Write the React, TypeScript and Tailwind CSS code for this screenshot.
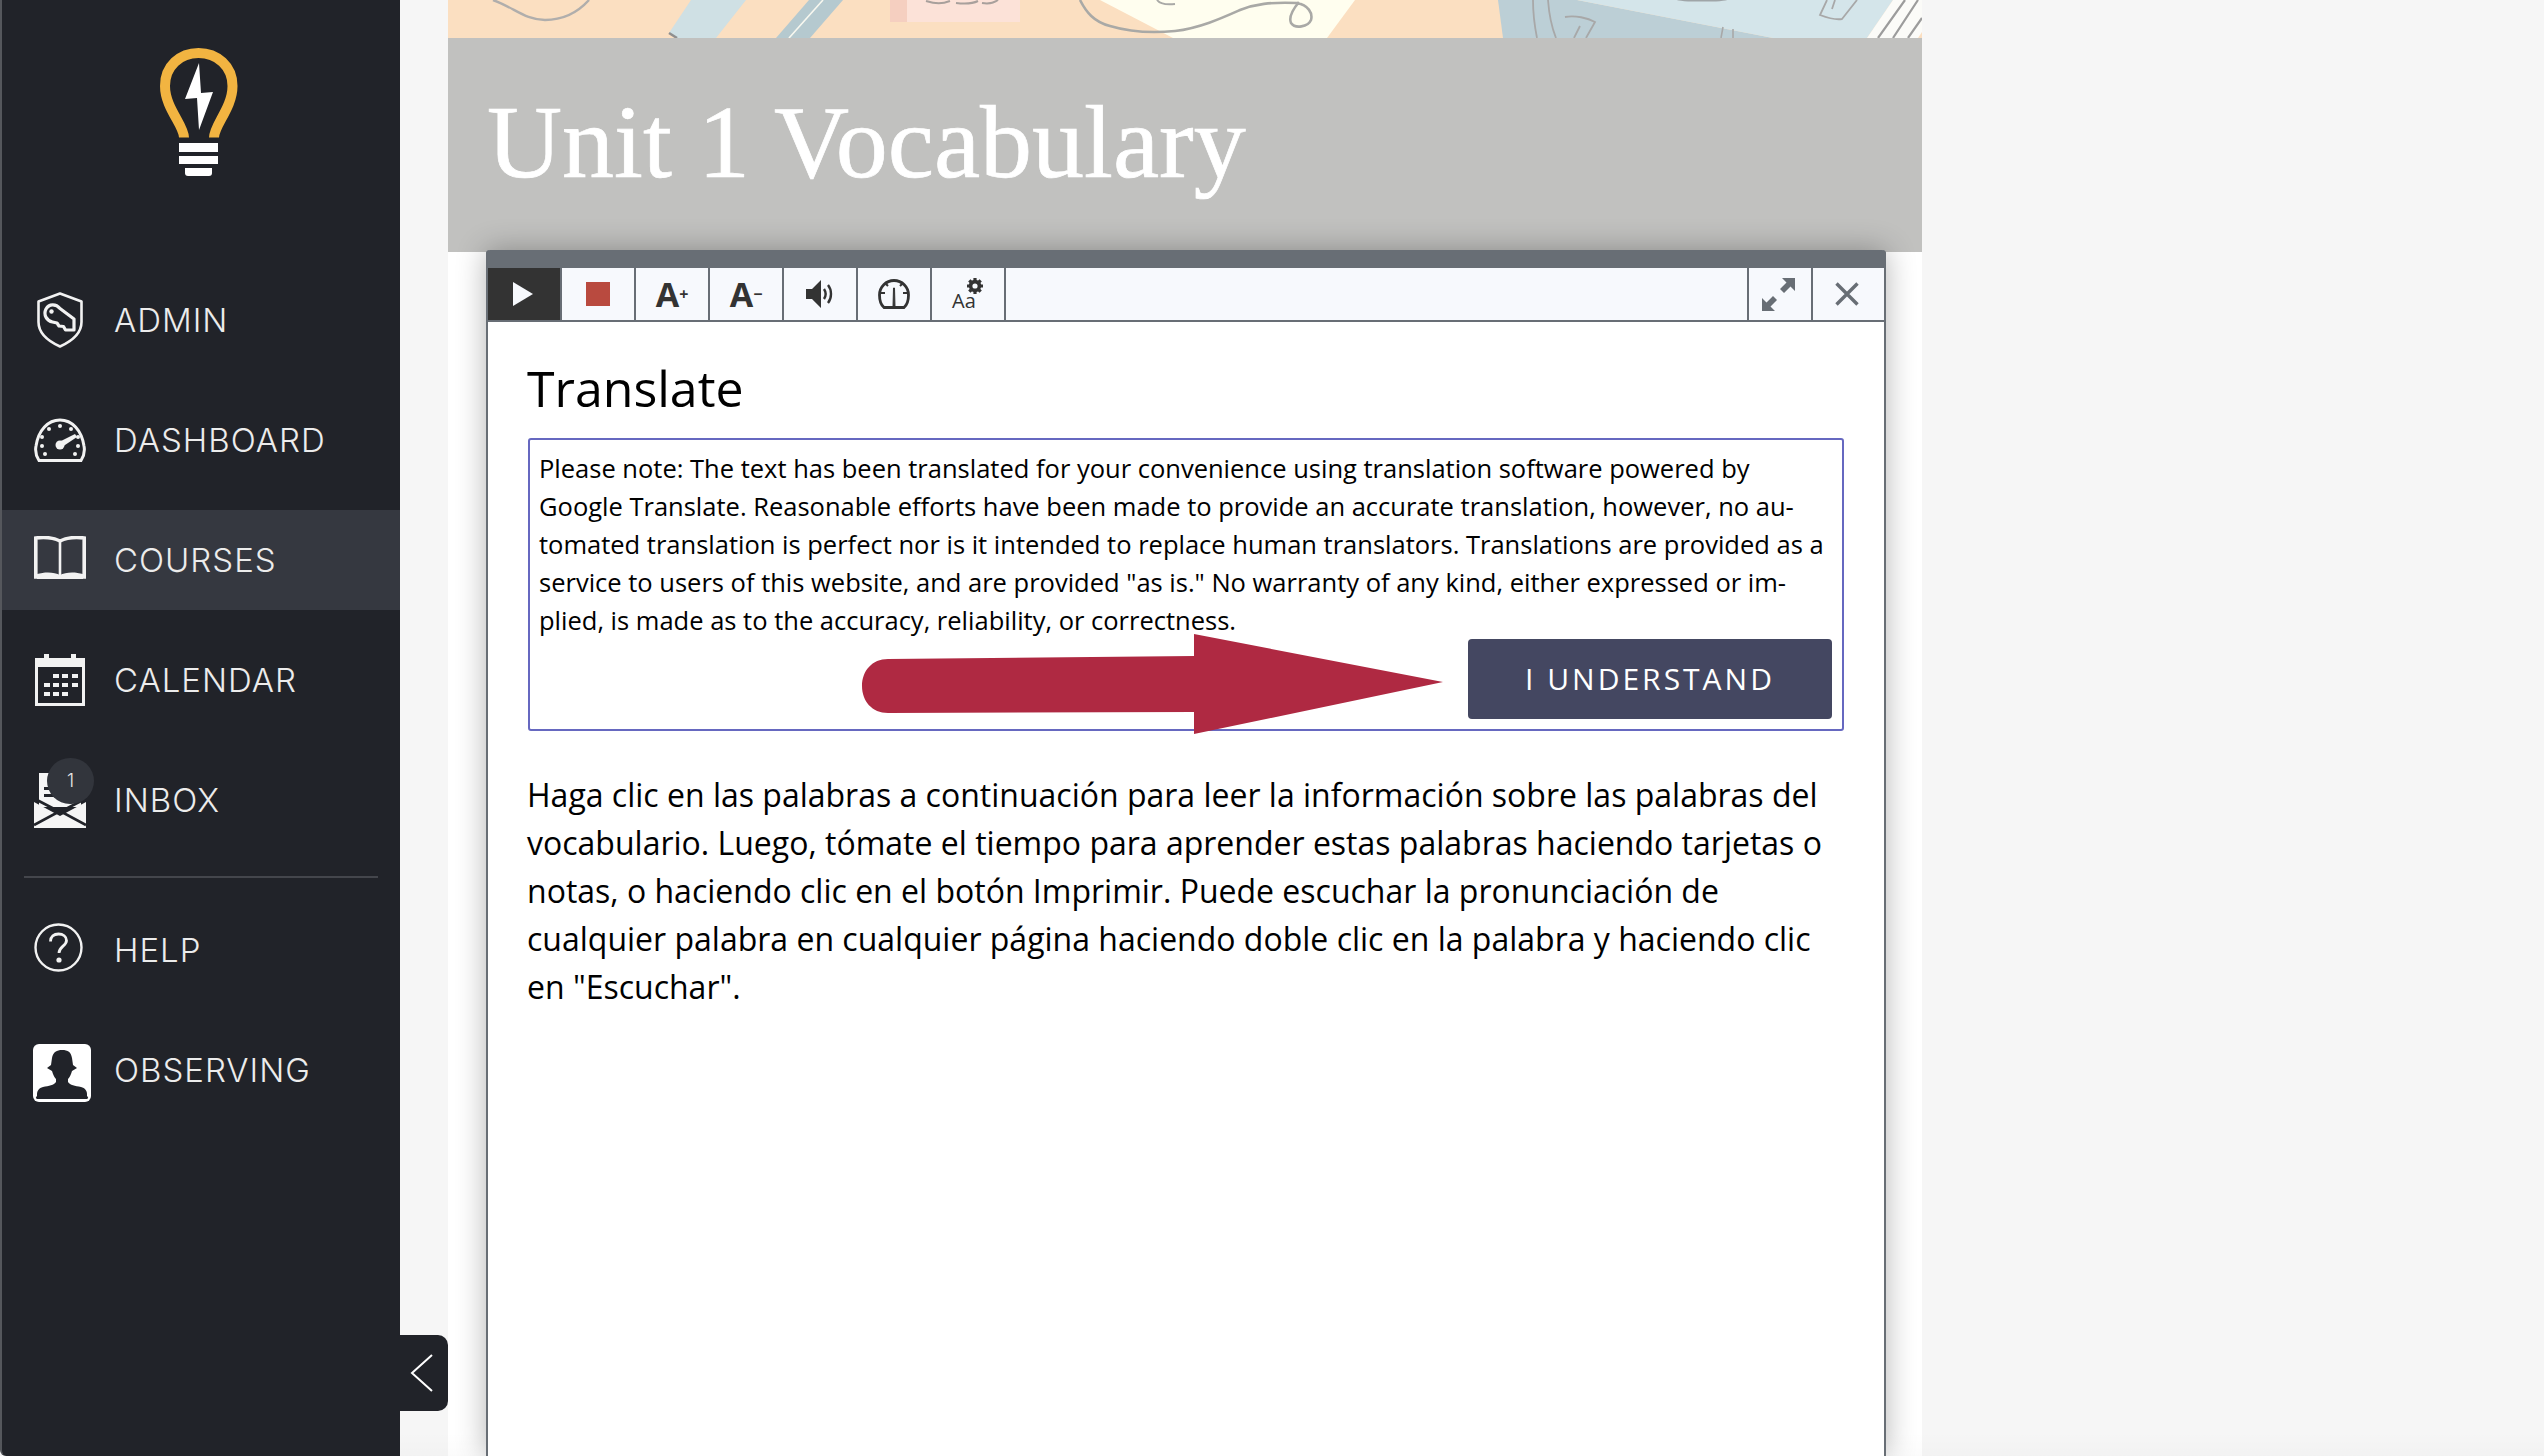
import React from "react";

const IconShield = () => (
  <svg width="46" height="56" viewBox="0 0 46 56" fill="none" stroke="#f2f2f2" strokeWidth="2.6" strokeLinejoin="round" className="ml-[3px]">
    <path d="M23 1.5 L44.5 9.5 V30 C44.5 42 33 50 23 54.5 C13 50 1.5 42 1.5 30 V9.5 Z" />
    <path d="M9 17 C12 11.5 19 11.5 23 16.5 L37 27 V38 H28.5 L26.5 34.5 L22 34 L20 31 L15.5 30 C10 29 6 23 9 17 Z" strokeWidth="3.2" />
    <circle cx="14.5" cy="19.5" r="2.2" fill="#f2f2f2" stroke="none" />
  </svg>
);

const IconGauge = () => (
  <svg width="52" height="44" viewBox="0 0 52 44" fill="none" stroke="#f2f2f2" strokeWidth="3">
    <path d="M5 42.5 C1.5 37 1 33 2 28 C4.5 12 14 2 26 2 C38 2 47.5 12 50 28 C51 33 50.5 37 47 42.5 Z" />
    <g fill="#f2f2f2" stroke="none">
      <circle cx="26" cy="8" r="2" />
      <circle cx="15" cy="11" r="2" />
      <circle cx="37" cy="11" r="2" />
      <circle cx="8" cy="19" r="2" />
      <circle cx="44" cy="19" r="2" />
      <circle cx="8" cy="28" r="2" />
      <circle cx="44" cy="28" r="2" />
      <circle cx="11" cy="36" r="2" />
      <circle cx="41" cy="36" r="2" />
      <circle cx="26" cy="27" r="4.5" />
      <path d="M24 24.5 L41 16 L43 19 L28 29 Z" />
    </g>
  </svg>
);

const IconBook = () => (
  <svg width="52" height="45" viewBox="0 0 52 45" fill="none" stroke="#f2f2f2" strokeWidth="3.6" className="-mt-[4px]">
    <path d="M26 5 C20 2 10 1 1.8 2 V41 H50.2 V2 C42 1 32 2 26 5 Z" />
    <path d="M26 5 V41" strokeWidth="2.6" />
    <path d="M3 38 C11 35.5 21 36 26 39 C31 36 41 35.5 49 38 V43 H3 Z" fill="#f2f2f2" stroke="none" />
  </svg>
);

const IconCalendar = () => (
  <svg width="50" height="52" viewBox="0 0 50 52" fill="#f2f2f2" className="ml-[1px]">
    <path fillRule="evenodd" d="M0 4 H9 V0 H14 V4 H36 V0 H41 V4 H50 V52 H0 Z M3 13 V49 H47 V13 Z" />
    <g>
      <rect x="18" y="20" width="6" height="4" />
      <rect x="27" y="20" width="6" height="4" />
      <rect x="37" y="20" width="6" height="4" />
      <rect x="9" y="29" width="6" height="4" />
      <rect x="18" y="29" width="6" height="4" />
      <rect x="27" y="29" width="6" height="4" />
      <rect x="37" y="29" width="6" height="4" />
      <rect x="9" y="38" width="6" height="4" />
      <rect x="18" y="38" width="6" height="4" />
      <rect x="27" y="38" width="6" height="4" />
    </g>
  </svg>
);

const IconInbox = () => (
  <svg width="52" height="55" viewBox="0 0 52 55" fill="#f5f5f5">
    <rect x="5" y="0" width="42" height="34" />
    <rect x="10" y="14" width="12" height="3" fill="#212329" />
    <rect x="10" y="21" width="12" height="3" fill="#212329" />
    <path d="M0 29 L26 43 L52 29 V55 H0 Z" />
    <path d="M0 52 L26 38 L52 52 M3 27 L26 39 L49 27" fill="none" stroke="#212329" strokeWidth="2.6" />
  </svg>
);

const IconHelp = () => (
  <svg width="49" height="49" viewBox="0 0 49 49" fill="none" stroke="#f2f2f2" strokeWidth="2.4">
    <circle cx="24.5" cy="24.5" r="23" />
    <path d="M16.5 18.5 C16.5 13.5 20 11 24.5 11 C29 11 32.5 13.5 32.5 17.5 C32.5 23 25 23.5 25 30" strokeWidth="2.8" />
    <circle cx="25" cy="37" r="2.6" fill="#f2f2f2" stroke="none" />
  </svg>
);

const IconObserving = () => (
  <svg width="58" height="58" viewBox="0 0 58 58" className="-ml-[1px]">
    <rect width="58" height="58" rx="6" fill="#fff" />
    <path
      d="M19 14 C20 8 24 6 29 6 C35 6 38 8 39 14 L40 21 L44 24 L39 27 C38 31 36 34 35 35 V38 C37 41 42 42 48 43 C52 44 54 47 54 50 V53 H4 V50 C4 47 6 44 10 43 C16 42 21 41 23 38 V35 C22 34 20 31 19 27 L14 24 L18 21 Z"
      fill="#212329"
    />
    <rect x="3" y="52" width="52" height="3" rx="1.5" fill="#212329" />
  </svg>
);

const nav = [
  { label: "ADMIN", icon: <IconShield /> },
  { label: "DASHBOARD", icon: <IconGauge /> },
  { label: "COURSES", icon: <IconBook />, active: true },
  { label: "CALENDAR", icon: <IconCalendar /> },
  { label: "INBOX", icon: <IconInbox />, badge: "1" },
];

function NavItem({ label, icon, active, badge }: { label: string; icon: React.ReactNode; active?: boolean; badge?: string }) {
  return (
    <div className={active ? "flex h-[100px] items-center bg-[#353840]" : "flex h-[100px] items-center"}>
      <div className="relative flex w-[112px] shrink-0 pl-[32px]">
        {icon}
        {badge && (
          <span className="absolute left-[45px] top-[-15px] flex h-[46px] w-[47px] items-center justify-center rounded-full bg-[#32353c] font-['Inter',sans-serif] text-[18px] font-light text-[#e8e8e8]">
            {badge}
          </span>
        )}
      </div>
      <span className="font-['Inter',sans-serif] text-[33px] font-light leading-none tracking-[1px] text-[#ececec]">{label}</span>
    </div>
  );
}

const ToolBtn = ({ children, dark }: { children: React.ReactNode; dark?: boolean }) => (
  <div className={dark ? "flex h-full w-[74px] items-center justify-center border-r-2 border-[#686e75] bg-[#333333]" : "flex h-full w-[74px] items-center justify-center border-r-2 border-[#686e75]"}>
    {children}
  </div>
);

const Banner = () => (
  <svg width="1474" height="38" viewBox="448 0 1474 38" className="block shrink-0">
    <rect x="448" y="0" width="1474" height="38" fill="#fbdfc1" />
    <path d="M493 0 C515 8 525 20 545 20 C565 20 580 10 589 0" fill="none" stroke="#b0aeac" strokeWidth="2.4" />
    <polygon points="691,0 746,0 716,38 677,38 669,33" fill="#cfe0e4" />
    <path d="M669 33 L677 38" stroke="#8f8f8f" strokeWidth="2.5" />
    <polygon points="809,0 843,0 810,38 776,38" fill="#b5c9cf" />
    <path d="M823 0 L789 38" stroke="#f8f8f0" strokeWidth="1.6" />
    <rect x="890" y="0" width="17" height="22" fill="#f5cfc0" />
    <rect x="907" y="0" width="113" height="22" fill="#fce2d8" />
    <path d="M926 1 C936 4 942 4 950 1 M956 3 C964 4 972 4 978 1 M982 3 C988 4 994 3 998 0" fill="none" stroke="#a8a09c" strokeWidth="2" />
    <polygon points="1100,0 1173,38 1327,38 1355,0" fill="#fffeef" />
    <path d="M1080 0 C1086 12 1094 22 1110 26 C1130 32 1155 33 1175 31 C1200 28 1222 18 1240 10 C1255 4 1270 2 1297 3 C1308 5 1313 13 1311 20 C1308 27 1295 29 1291 23 C1288 16 1294 8 1299 2"
      fill="none" stroke="#a9a9a6" strokeWidth="2.6" />
    <path d="M1157 0 C1160 4 1166 5 1175 4" fill="none" stroke="#a9a9a6" strokeWidth="2" />
    <polygon points="1498,0 1503,38 1773,38 1577,0" fill="#bccfd6" />
    <polygon points="1577,0 1773,38 1867,38 1893,0" fill="#d4e5ea" />
    <path d="M1533 0 C1533 14 1535 28 1537 38 M1548 0 C1549 14 1552 28 1556 38 M1565 17 C1575 15 1588 18 1595 22 L1586 38 M1574 38 L1580 26" fill="none" stroke="#a8a8a8" strokeWidth="1.8" />
    <path d="M1827 0 L1820 15 C1828 18 1836 20 1842 19 L1857 0 M1835 0 L1832 9" fill="none" stroke="#a8a8a8" strokeWidth="1.8" />
    <path d="M1723 27 L1721 38 M1733 29 L1733 38" fill="none" stroke="#a8a8a8" strokeWidth="1.6" />
    <ellipse cx="1702" cy="0" rx="25" ry="1.6" fill="#9fa5a8" />
    <polygon points="1867,38 1893,0 1922,0 1922,38" fill="#fbfbf8" />
    <path d="M1878 38 L1905 0 M1893 38 L1918 0 M1908 38 L1922 18" fill="none" stroke="#9c9c9c" strokeWidth="2.2" />
    <polygon points="1918,38 1922,32 1922,38" fill="#fbdfc1" />
  </svg>
);

export default function App() {
  return (
    <div className="relative flex h-[1456px] w-[2544px] overflow-hidden bg-[#f6f6f6]">
      <aside className="relative flex h-full w-[400px] shrink-0 flex-col rounded-bl-[6px] border-l-2 border-[#55575c] bg-[#212329]">
        <div className="flex justify-center pr-[4px] pt-[48px]">
          <svg width="78" height="128" viewBox="160 48 78 128">
            <path d="M184 137.5 C184 125 165 108 165 86 C165 66 180 53 198.5 53 C217 53 232.5 66 232.5 86 C232.5 108 214 125 214 137.5" fill="none" stroke="#f2b441" strokeWidth="10" />
            <polygon points="199,63 185,99 197,98 199,130 213,92 201,93" fill="#ffffff" />
            <rect x="179" y="143" width="39" height="9" fill="#fff" />
            <rect x="179" y="156" width="39" height="8" fill="#fff" />
            <path d="M185 168 H212 V173 C212 175 211 176 209 176 H188 C186 176 185 175 185 173 Z" fill="#fff" />
          </svg>
        </div>
        <nav className="mt-[94px] flex flex-col gap-[20px]">
          {nav.map((n) => (
            <NavItem key={n.label} {...n} />
          ))}
        </nav>
        <div className="mx-[22px] mt-[26px] h-[2px] bg-[#44464c]" />
        <div className="mt-[22px] flex flex-col gap-[20px]">
          <NavItem label="HELP" icon={<div className="-mt-[6px]"><IconHelp /></div>} />
          <NavItem label="OBSERVING" icon={<div className="mt-[6px]"><IconObserving /></div>} />
        </div>
        <button className="absolute bottom-[45px] left-[398px] flex h-[76px] w-[48px] items-center justify-center rounded-r-[10px] bg-[#212329] pr-[5px]">
          <svg width="24" height="40" viewBox="0 0 24 40" fill="none" stroke="#ffffff" strokeWidth="2">
            <path d="M22 2 L2 20 L22 38" />
          </svg>
        </button>
      </aside>

      <main className="ml-[48px] flex h-full w-[1474px] shrink-0 flex-col overflow-hidden bg-white">
        <Banner />
        <div className="flex h-[214px] shrink-0 bg-[#c1c1bf] pl-[39px] pt-[49px]">
          <h1 className="whitespace-nowrap font-['Liberation_Serif',serif] text-[104px] font-normal leading-[110px] text-white [-webkit-text-stroke:0.7px_white]">Unit 1 Vocabulary</h1>
        </div>
        <section className="relative z-10 -mt-[2px] ml-[38px] flex w-[1400px] flex-1 flex-col rounded-t-[4px] border-x-2 border-[#686e75] bg-white shadow-[0_0_30px_rgba(0,0,0,0.3)]">
          <div className="-mx-[2px] h-[18px] shrink-0 rounded-t-[4px] bg-[#686e75]" />
          <div className="flex h-[54px] shrink-0 border-b-2 border-[#686e75] bg-[#f7f9fd]">
            <ToolBtn dark>
              <svg width="20" height="24" viewBox="0 0 20 24" className="-ml-[2px]"><polygon points="0,0 20,12 0,24" fill="#f7f9fd" /></svg>
            </ToolBtn>
            <ToolBtn><div className="-ml-[1px] h-[24px] w-[24px] bg-[#b94a3f]" /></ToolBtn>
            <ToolBtn>
              <span className="flex items-baseline font-['Open_Sans',sans-serif] font-bold leading-none text-[#333]">
                <span className="text-[34px]">A</span><span className="-translate-y-[7px] text-[16px]">+</span>
              </span>
            </ToolBtn>
            <ToolBtn>
              <span className="flex items-baseline font-['Open_Sans',sans-serif] font-bold leading-none text-[#333]">
                <span className="text-[34px]">A</span><span className="-translate-y-[7px] text-[16px]">−</span>
              </span>
            </ToolBtn>
            <ToolBtn>
              <svg width="28" height="28" viewBox="0 0 28 28" fill="#333">
                <path d="M0 9 H6 L15 0 V28 L6 19 H0 Z" />
                <path d="M18 9 C20 12 20 16 18 19 M22 5 C26 10 26 18 22 23" fill="none" stroke="#333" strokeWidth="2.4" />
              </svg>
            </ToolBtn>
            <ToolBtn>
              <svg width="32" height="30" viewBox="0 0 32 30" fill="none" stroke="#333" strokeWidth="2.8">
                <path d="M6 28.5 C2.5 25.5 1.5 21 1.5 16 C1.5 8 8 1.5 16 1.5 C24 1.5 30.5 8 30.5 16 C30.5 21 29.5 25.5 26 28.5 Z" />
                <path d="M15 28 L15.5 9 H16.5 L17 28 Z" fill="#333" strokeWidth="1" />
                <path d="M7 14 H3 M29 14 H25 M10 7 L8 5 M22 7 L24 5" strokeWidth="2" />
              </svg>
            </ToolBtn>
            <ToolBtn>
              <span className="relative block h-[30px] w-[34px]">
                <span className="absolute bottom-[-2px] left-[1px] font-['Open_Sans',sans-serif] text-[20px] leading-none text-[#333]">Aa</span>
                <svg className="absolute right-[2px] top-[-1px]" width="16" height="16" viewBox="0 0 16 16">
                  <circle cx="8" cy="8" r="4.4" fill="none" stroke="#333" strokeWidth="3.6" />
                  <path d="M8 0 V2.5 M8 13.5 V16 M0 8 H2.5 M13.5 8 H16 M2.3 2.3 L4 4 M12 12 L13.7 13.7 M13.7 2.3 L12 4 M4 12 L2.3 13.7" stroke="#333" strokeWidth="3.2" />
                </svg>
              </span>
            </ToolBtn>
            <div className="flex-1" />
            <div className="flex h-full w-[64px] items-center justify-center border-l-2 border-[#686e75] pr-[3px]">
              <svg width="33" height="33" viewBox="0 0 33 33" fill="#686e75">
                <path d="M20 0 H33 V13 L28.5 8.5 L22 15 L18 11 L24.5 4.5 Z" />
                <path d="M13 33 H0 V20 L4.5 24.5 L11 18 L15 22 L8.5 28.5 Z" />
              </svg>
            </div>
            <div className="flex h-full w-[73px] items-center justify-center border-l-2 border-[#686e75] pr-[3px]">
              <svg width="24" height="24" viewBox="0 0 24 24" stroke="#686e75" strokeWidth="3.4" fill="none">
                <path d="M1.5 1.5 L22.5 22.5 M22.5 1.5 L1.5 22.5" />
              </svg>
            </div>
          </div>

          <div className="flex flex-col pl-[39px] pr-[39px] pt-[36px] font-['Open_Sans',sans-serif] text-black">
            <h2 className="text-[50px] font-normal leading-[60px]">Translate</h2>
            <div className="relative mx-[1px] mt-[20px] flex h-[293px] flex-col rounded-[3px] border-2 border-[#6668c0] pb-[9px] pl-[9px] pr-[10px] pt-[9px]">
              <p className="whitespace-nowrap text-[25.5px] leading-[38px]">
                Please note: The text has been translated for your convenience using translation software powered by<br />
                Google Translate. Reasonable efforts have been made to provide an accurate translation, however, no au-<br />
                tomated translation is perfect nor is it intended to replace human translators. Translations are provided as a<br />
                service to users of this website, and are provided "as is." No warranty of any kind, either expressed or im-<br />
                plied, is made as to the accuracy, reliability, or correctness.
              </p>
              <div className="flex justify-end">
                <button className="flex h-[80px] w-[364px] items-center justify-center rounded-[4px] bg-[#444761] pb-[2px] text-[30px] tracking-[3px] text-white">I UNDERSTAND</button>
              </div>
              <svg className="absolute left-[330px] top-[194px]" width="584" height="102" viewBox="0 0 584 102">
                <path d="M28 25 L334 22 V0 L583 48 L334 100 V78 L28 79 C12 79 2 67 2 52 C2 37 12 25 28 25 Z" fill="#af2942" />
              </svg>
            </div>
            <p className="mt-[40px] text-[32px] leading-[48px]">
              Haga clic en las palabras a continuación para leer la información sobre las palabras del vocabulario. Luego, tómate el tiempo para aprender estas palabras haciendo tarjetas o notas, o haciendo clic en el botón Imprimir. Puede escuchar la pronunciación de cualquier palabra en cualquier página haciendo doble clic en la palabra y haciendo clic en "Escuchar".
            </p>
          </div>
        </section>
      </main>
      <div className="pointer-events-none absolute inset-x-0 bottom-0 h-[24px] bg-gradient-to-b from-transparent to-black/[0.015]" />
    </div>
  );
}
